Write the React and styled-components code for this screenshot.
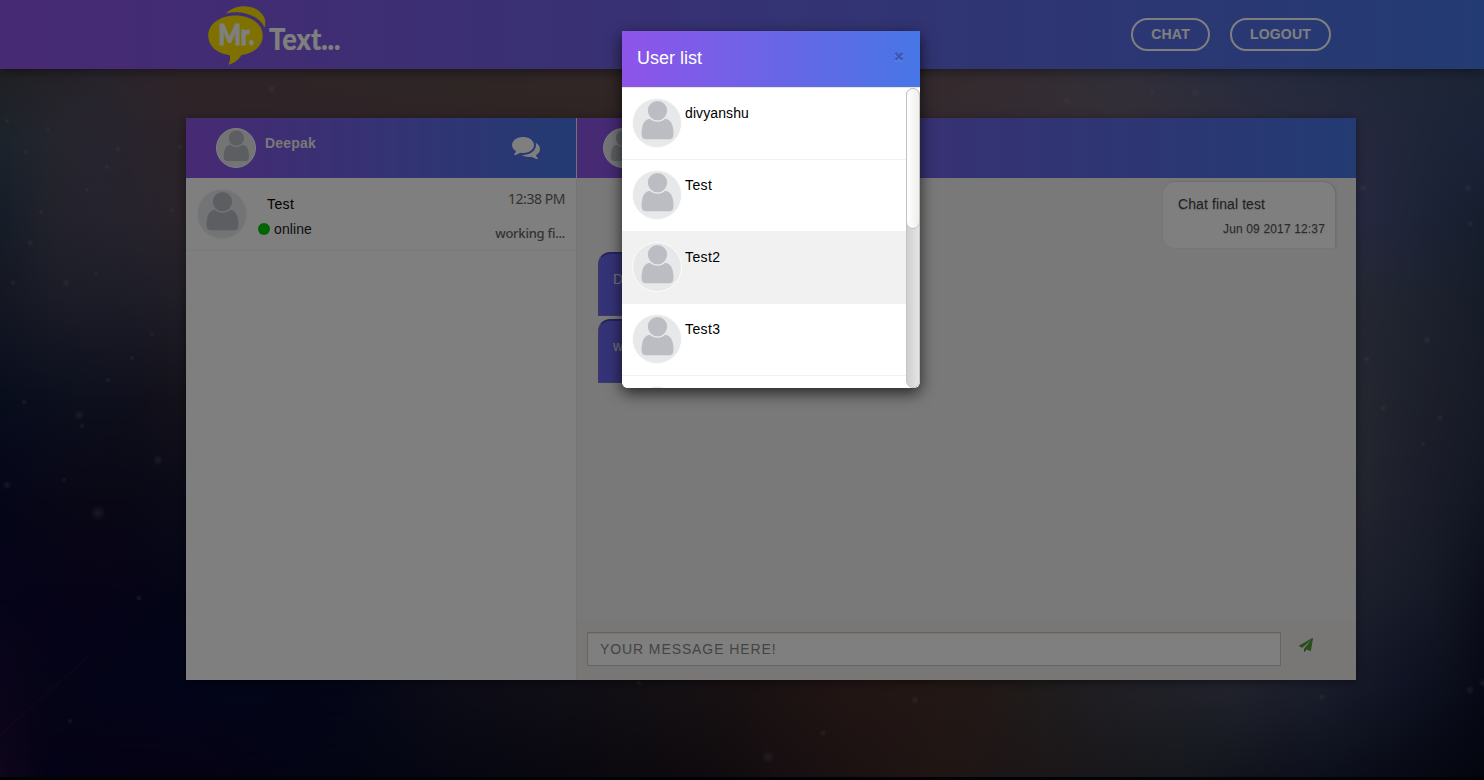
import React from "react";
import styled, { createGlobalStyle } from "styled-components";

const GlobalStyle = createGlobalStyle`
  * { box-sizing: border-box; }
  html, body { margin: 0; padding: 0; }
  body {
    font-family: "Liberation Sans", Helvetica, Arial, sans-serif;
    font-size: 14px;
    line-height: 20px;
    color: #333;
    overflow: hidden;
    background: #04040c;
  }
`;

const brandGradient = "linear-gradient(to right, #8e54e9, #4776e6)";

/* ---------- night sky ---------- */

const Page = styled.div`
  position: relative;
  width: 100%;
  height: 780px;
  overflow: hidden;
`;

const Sky = styled.div`
  position: absolute;
  inset: 0 0 3px 0;
  overflow: hidden;
  filter: saturate(0.9) brightness(0.96);
`;

const SkyBand = styled.div`
  position: absolute;
  inset: 0;
  background: linear-gradient(to right, ${(p) => p.$stops});
  mask-image: linear-gradient(
    to bottom,
    transparent ${(p) => p.$from}px,
    #000 ${(p) => p.$to}px
  );
`;

const Stars = styled.svg`
  position: absolute;
  inset: 0;
`;

const bands = [
  { from: -2, to: -1, stops: "#42444e 0, #544c5e 100px, #644c54 180px, #64504e 500px, #6c544e 780px, #705a66 1000px, #686278 1130px, #525a86 1250px, #384c74 1484px" },
  { from: 80, to: 140, stops: "#384a5e 0, #504e62 60px, #524c64 110px, #5e4858 186px, #664a4c 600px, #6c5e74 1130px, #505488 1356px, #3a4c7a 1440px, #36487a 1484px" },
  { from: 140, to: 220, stops: "#2c3c56 0, #4a485e 60px, #4e4a62 110px, #584858 186px, #605060 770px, #50548a 1356px, #3c4a78 1420px, #2c3e62 1484px" },
  { from: 220, to: 300, stops: "#2a304c 0, #383a54 60px, #3c3c56 130px, #443e52 186px, #504050 770px, #4c546c 1356px, #3e4864 1420px, #2e3c56 1484px" },
  { from: 300, to: 400, stops: "#101c40 0, #1a2040 80px, #20203c 140px, #2a2638 186px, #302430 770px, #4c5268 1356px, #40485e 1400px, #2e3654 1484px" },
  { from: 400, to: 500, stops: "#0a0c38 0, #141030 90px, #141030 130px, #141636 186px, #281c28 770px, #4a4e64 1356px, #3c445e 1400px, #262c4c 1484px" },
  { from: 500, to: 600, stops: "#0c0838 0, #0e0634 90px, #080a34 186px, #201828 770px, #3a4060 1356px, #2c3252 1430px, #161c38 1484px" },
  { from: 600, to: 690, stops: "#180a3a 0, #0a0834 60px, #060a3a 186px, #080c34 340px, #1a1a34 450px, #24202e 600px, #342426 740px, #4a2c2a 850px, #4a322c 970px, #443a3a 1040px, #424250 1130px, #44485e 1230px, #343c5c 1320px, #20284c 1400px, #0e1430 1484px" },
  { from: 690, to: 775, stops: "#200e3c 0, #0a0432 50px, #0e042e 180px, #06082e 280px, #0a0c2c 390px, #141222 560px, #20161e 700px, #382224 820px, #442c28 940px, #383036 1070px, #2c323e 1180px, #1a223e 1320px, #060c20 1484px" },
];

const stars = [
  [7, 121, 2], [48, 129, 1.6], [26, 152, 2], [118, 149, 2.4], [107, 167, 2.2], [87, 190, 2],
  [41, 212, 2], [30, 243, 2.6], [66, 283, 3], [13, 283, 2], [96, 274, 1.6], [152, 334, 1.8],
  [132, 358, 1.8], [108, 380, 2.2], [24, 402, 2.2], [79, 415, 3.6], [82, 426, 2], [158, 460, 3.4],
  [7, 485, 3.2], [64, 480, 2], [98, 513, 5.4], [139, 598, 2.4], [70, 721, 2], [172, 210, 2],
  [180, 147, 2], [272, 89, 3], [1363, 188, 3], [1468, 188, 3], [1470, 224, 2.6], [1427, 340, 3],
  [1367, 359, 2.4], [1383, 408, 2.4], [1440, 418, 2.6], [1423, 444, 2], [1470, 690, 3.4],
  [1483, 683, 3], [639, 683, 2], [915, 700, 3], [768, 757, 4.5], [823, 733, 2.6], [1322, 697, 2.6],
  [1195, 93, 3.4], [1067, 101, 3], [1152, 91, 2],
];

function NightSky() {
  return (
    <Sky>
      {bands.map((b) => (
        <SkyBand key={b.to} $from={b.from} $to={b.to} $stops={b.stops} />
      ))}
      <Stars width="1484" height="777">
        <defs>
          <radialGradient id="star">
            <stop offset="0" stopColor="#c490b0" stopOpacity="0.26" />
            <stop offset="1" stopColor="#b080a0" stopOpacity="0" />
          </radialGradient>
        </defs>
        {stars.map(([x, y, r]) => (
          <circle key={`${x}-${y}`} cx={x} cy={y} r={r * 1.5} fill="url(#star)" />
        ))}
        <path d="M0 735 L90 655" stroke="#50204c" strokeOpacity="0.18" strokeWidth="2" />
      </Stars>
    </Sky>
  );
}

/* ---------- top bar ---------- */

const TopBar = styled.header`
  position: relative;
  display: flex;
  align-items: flex-start;
  justify-content: space-between;
  height: 69px;
  padding: 0 153px 0 206px;
  background: ${brandGradient};
  box-shadow: 0 3px 10px rgba(0, 0, 0, 0.4);
`;

const Nav = styled.nav`
  display: flex;
  gap: 20px;
  padding-top: 18px;
`;

const PillButton = styled.button`
  height: 33px;
  padding: 0 18px 1px;
  border: 2px solid #fff;
  border-radius: 17px;
  background: transparent;
  color: #fff;
  font: bold 14px/20px "Liberation Sans", Helvetica, Arial, sans-serif;
  letter-spacing: 0.2px;
  text-transform: uppercase;
`;

function Logo() {
  return (
    <svg width="140" height="69" viewBox="206 0 140 69">
      <path d="M226 13.500 C233 5 250 3.500 259 11 C265 16 266.500 21 264.500 27.500 C259 15 241 9.500 226 13.500 Z" fill="#ffe200" />
      <path d="M235.500 15.500 C251 15.500 262.800 24 262.800 35.500 C262.800 46 254 53.500 241.500 55 C239 59 235 63 228.500 64.800 C230 61.500 230.500 58.500 229.800 55.200 C217 53.500 208.200 46 208.200 35.500 C208.200 24 220 15.500 235.500 15.500 Z" fill="#ffe200" />
      <g fill="#fff" stroke="#fff" strokeLinejoin="round" fontFamily='"Lato", "Open Sans", sans-serif' fontWeight="900">
        <text x="218.500" y="45" fontSize="29" strokeWidth="1" textLength="36" lengthAdjust="spacingAndGlyphs">Mr.</text>
        <text x="269" y="50" fontSize="30.500" strokeWidth="0.2" textLength="71.500" lengthAdjust="spacingAndGlyphs">Text...</text>
      </g>
    </svg>
  );
}

/* ---------- avatar ---------- */

const AvatarFrame = styled.svg`
  display: block;
  flex: none;
  width: ${(p) => p.$size}px;
  height: ${(p) => p.$size}px;
  border-radius: 50%;
  border: 1px solid ${(p) => p.$ring};
  background: #e6e8ea;
`;

function Avatar({ size, ring = "#fcfcfc" }) {
  return (
    <AvatarFrame $size={size} $ring={ring} viewBox="0 0 48 48">
      <path d="M8.500 35 C8.500 25 12 19.800 17.500 19.800 H31.500 C37 19.800 40.500 25 40.500 35 C40.500 38.500 39 40.300 36 40.300 H13 C10 40.300 8.500 38.500 8.500 35 Z" fill="#bbbdc3" />
      <circle cx="24.500" cy="11.600" r="10.400" fill="#bbbdc3" stroke="#e6e8ea" strokeWidth="1.500" />
    </AvatarFrame>
  );
}

/* ---------- chat panel ---------- */

const Panel = styled.main`
  position: relative;
  display: flex;
  width: 1170px;
  height: 562px;
  margin: 49px 0 0 186px;
  box-shadow: 0 2px 10px rgba(0, 0, 0, 0.4);
`;

const Sidebar = styled.aside`
  width: 391px;
  background: #fff;
  border-right: 1px solid #e8e8e8;
`;

const PanelHeader = styled.div`
  display: flex;
  align-items: flex-start;
  height: 60px;
  padding: 10px 36px 0 ${(p) => p.$indent}px;
  background: ${brandGradient};
`;

const OwnerName = styled.strong`
  flex: 1;
  margin: 5px 0 0 9px;
  color: #f0f0f0;
  letter-spacing: 0.2px;
`;

const CommentsIcon = styled.svg`
  width: 28px;
  height: 28px;
  margin-top: 5px;
  fill: #fff;
`;

const Contact = styled.div`
  display: flex;
  height: 73px;
  padding: 11px 11px 0;
  border-bottom: 1px solid #f4f4f4;
`;

const ContactInfo = styled.div`
  flex: 1;
  padding: 5px 0 0 11px;
`;

const ContactName = styled.div`
  padding-left: 9px;
  color: #000;
  letter-spacing: 0.4px;
`;

const Status = styled.div`
  display: flex;
  align-items: center;
  gap: 4px;
  margin-top: 5px;
  color: #222;
  letter-spacing: 0.1px;
`;

const OnlineDot = styled.i`
  width: 12px;
  height: 12px;
  border-radius: 50%;
  background: #00c800;
`;

const ContactMeta = styled.div`
  display: flex;
  flex-direction: column;
  align-items: flex-end;
  gap: 14px;
  color: #666;
  font-family: "Noto Sans", "Open Sans", sans-serif;
`;

const MetaTime = styled.span`
  font-size: 14px;
  letter-spacing: -0.45px;
`;

const MetaPreview = styled.span`
  font-size: 13px;
  font-weight: 500;
  letter-spacing: -0.25px;
`;

const Conversation = styled.section`
  display: flex;
  flex-direction: column;
  width: 779px;
  background: #f3f3f3;
`;

const Messages = styled.div`
  display: flex;
  flex: 1;
  flex-direction: column;
  padding: 4px 21px 0;
`;

const SentMessage = styled.div`
  align-self: flex-end;
  width: 172px;
  height: 66px;
  padding: 12px 10px 0 15px;
  border-radius: 12px 12px 0 12px;
  background: #fff;
  box-shadow: 2px 0 2px rgba(0, 0, 0, 0.08), 0 -1px 2px rgba(0, 0, 0, 0.08);
  color: #444;
  letter-spacing: 0.1px;
  text-shadow: 0 1px 1px rgba(0, 0, 0, 0.2);
`;

const ReceivedMessage = styled.div`
  width: 172px;
  height: 64px;
  margin-top: ${(p) => p.$gap}px;
  padding: 15px 14px 0;
  border: 1px solid #7a76c8;
  border-top: 2px solid #4a48c0;
  border-radius: 12px 12px 12px 0;
  background: #6b66ee;
  color: #e8e8f4;
`;

const MessageDate = styled.div`
  margin-top: 5px;
  font-size: 12px;
  color: #555;
  text-align: right;
  letter-spacing: 0.15px;
`;

const Composer = styled.form`
  display: flex;
  height: 60px;
  padding: 12px 0 0 10px;
  background: #f2efeb;
`;

const MessageInput = styled.input`
  width: 694px;
  height: 34px;
  padding: 0 12px;
  border: 1px solid #c8c8c8;
  border-radius: 0;
  background: #fff;
  box-shadow: inset 0 1px 1px rgba(0, 0, 0, 0.08);
  font: 14px "Liberation Sans", Helvetica, Arial, sans-serif;
  letter-spacing: 0.9px;
  &::placeholder { color: #888; opacity: 1; }
`;

const SendIcon = styled.svg`
  width: 14px;
  height: 14px;
  margin: 6px 0 0 18px;
  fill: #559c3c;
`;

/* ---------- modal ---------- */

const Backdrop = styled.div`
  position: absolute;
  inset: 0;
  background: rgba(0, 0, 0, 0.5);
`;

const Dialog = styled.div`
  position: relative;
  width: 298px;
  height: 357px;
  margin: 31px 0 0 622px;
  border-radius: 0 0 6px 6px;
  background: #fff;
  box-shadow: 0 5px 15px rgba(0, 0, 0, 0.7);
  overflow: hidden;
`;

const DialogHeader = styled.div`
  display: flex;
  justify-content: space-between;
  height: 57px;
  padding: 15px;
  border-bottom: 1px solid #e5e5e5;
  background: ${brandGradient};
  background-clip: padding-box;
`;

const DialogTitle = styled.h4`
  margin: 0;
  color: #fff;
  font-size: 18px;
  font-weight: normal;
  line-height: 25px;
`;

const CloseIcon = styled.svg`
  width: 10px;
  height: 11px;
  margin: 5px 1px 0 0;
`;

const DialogBody = styled.div`
  display: flex;
  height: 300px;
`;

const UserList = styled.div`
  flex: 1;
  overflow: hidden;
`;

const UserRow = styled.div`
  display: flex;
  height: 72px;
  padding: 10px 0 0 10px;
  gap: 3px;
  border-bottom: 1px solid #f1f1f1;
  background: ${(p) => (p.$active ? "#f1f1f1" : "#fff")};
  color: #000;
`;

const UserName = styled.span`
  margin-top: 5px;
  letter-spacing: ${(p) => (p.$loose ? 0.4 : 0.1)}px;
`;

const ScrollTrack = styled.div`
  width: 14px;
  border: 1px solid #c4c4c2;
  border-radius: 7px;
  background: linear-gradient(to right, #cfcfcf, #e4e4e4);
`;

const ScrollThumb = styled.div`
  width: 14px;
  height: 141px;
  margin: -1px;
  border: 1px solid #c4c1bc;
  border-radius: 7px;
  background: linear-gradient(to right, #fff, #eeeeec);
`;

const users = ["divyanshu", "Test", "Test2", "Test3", ""];

export default function App() {
  return (
    <Page>
      <GlobalStyle />
      <NightSky />
      <TopBar>
        <Logo />
        <Nav>
          <PillButton>Chat</PillButton>
          <PillButton>Logout</PillButton>
        </Nav>
      </TopBar>
      <Panel>
        <Sidebar>
          <PanelHeader $indent={30}>
            <Avatar size={40} />
            <OwnerName>Deepak</OwnerName>
            <CommentsIcon viewBox="0 0 1792 1792">
              <path d="M1408 768q0 139-94 257t-256.500 186.500-353.500 68.500q-86 0-176-16-124 88-278 128-36 9-86 16h-3q-11 0-20.500-8t-11.500-21q-1-3-1-6.500t.5-6.500 2-6l2.500-5 3.500-5.500 4-5 4.500-5 4-4.500q5-6 23-25t26-29.500 22.500-29 25-38.500 20.500-44q-124-72-195-177t-71-224q0-139 94-257t256.500-186.500 353.500-68.500 353.500 68.500 256.500 186.500 94 257zm384 256q0 120-71 224.500t-195 176.500q10 24 20.500 44t25 38.500 22.500 29 26 29.500 23 25q1 1 4 4.500t4.500 5 4 5 3.500 5.500l2.500 5 2 6 .5 6.500-1 6.500q-3 14-13 22t-22 7q-50-7-86-16-154-40-278-128-90 16-176 16-271 0-472-132 58 4 88 4 161 0 309-45t264-129q125-92 192-212t67-254q0-77-23-152 129 71 204 178t75 230z" />
            </CommentsIcon>
          </PanelHeader>
          <Contact>
            <Avatar size={50} ring="#f4f4f4" />
            <ContactInfo>
              <ContactName>Test</ContactName>
              <Status>
                <OnlineDot />
                online
              </Status>
            </ContactInfo>
            <ContactMeta>
              <MetaTime>12:38 PM</MetaTime>
              <MetaPreview>working fi...</MetaPreview>
            </ContactMeta>
          </Contact>
        </Sidebar>
        <Conversation>
          <PanelHeader $indent={26}>
            <Avatar size={40} />
          </PanelHeader>
          <Messages>
            <SentMessage>
              Chat final test
              <MessageDate>Jun 09 2017 12:37</MessageDate>
            </SentMessage>
            <ReceivedMessage $gap={4}>D</ReceivedMessage>
            <ReceivedMessage $gap={3}>w</ReceivedMessage>
          </Messages>
          <Composer>
            <MessageInput placeholder="YOUR MESSAGE HERE!" />
            <SendIcon viewBox="0 0 1792 1792">
              <path d="M1764 11q33 24 27 64l-256 1536q-5 29-32 45-14 8-31 8-11 0-24-5l-453-185-242 295q-18 23-49 23-13 0-22-4-19-7-30.500-23.500t-11.500-36.500v-349l864-1059-1069 925-395-162q-37-14-40-55-2-40 32-59l1664-960q15-9 32-9 20 0 36 11z" />
            </SendIcon>
          </Composer>
        </Conversation>
      </Panel>
      <Backdrop>
        <Dialog>
          <DialogHeader>
            <DialogTitle>User list</DialogTitle>
            <CloseIcon viewBox="0 0 10 11">
              <path d="M1.500 3 L8.500 10 M8.500 3 L1.500 10" stroke="#6d8cec" strokeWidth="2.800" />
              <path d="M1.500 2 L8.500 9 M8.500 2 L1.500 9" stroke="#3b5cb6" strokeWidth="2.800" />
            </CloseIcon>
          </DialogHeader>
          <DialogBody>
            <UserList>
              {users.map((name) => (
                <UserRow key={name} $active={name === "Test2"}>
                  <Avatar size={50} />
                  {name && <UserName $loose={name.startsWith("Test")}>{name}</UserName>}
                </UserRow>
              ))}
            </UserList>
            <ScrollTrack>
              <ScrollThumb />
            </ScrollTrack>
          </DialogBody>
        </Dialog>
      </Backdrop>
    </Page>
  );
}
